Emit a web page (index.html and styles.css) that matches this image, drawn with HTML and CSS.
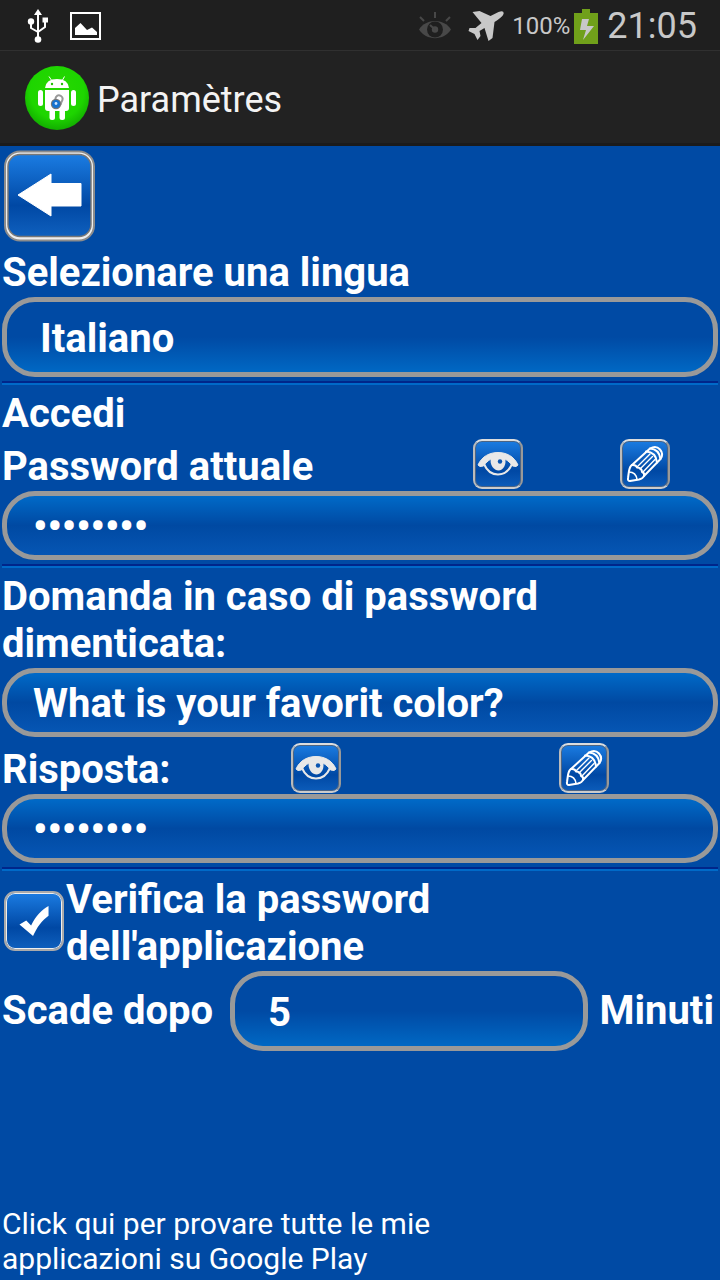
FILE: index.html
```html
<!DOCTYPE html>
<html lang="it">
<head>
<meta charset="utf-8">
<meta name="viewport" content="width=device-width, initial-scale=1">
<title>Paramètres</title>
<link rel="stylesheet" href="styles.css">
</head>
<body>
<svg class="defs" aria-hidden="true">
  <defs>
    <linearGradient id="face" x1="0" y1="0" x2="0" y2="1">
      <stop offset="0" stop-color="#1b7ce2"/>
      <stop offset="0.62" stop-color="#0048a4"/>
      <stop offset="1" stop-color="#0f60be"/>
    </linearGradient>
    <radialGradient id="green" cx="0.5" cy="0.4" r="0.6">
      <stop offset="0" stop-color="#27d800"/>
      <stop offset="0.7" stop-color="#1ed500"/>
      <stop offset="1" stop-color="#12ad00"/>
    </radialGradient>
    <symbol id="eye" viewBox="0 0 50 50">
      <path d="M11 25C14 32 19 35.500 25 35.500S36 32 39 25" fill="none" stroke="#e8e8e8" stroke-width="2"/>
      <path d="M5 26C9 17 17 13.500 25 13.500S41 17 45 26L43 27.500L39.500 27C35 20.500 30 18.500 25 18.500S15 20.500 10.500 27L7 27.500Z" fill="#e8e8e8" stroke="#e8e8e8" stroke-linejoin="round"/>
      <path d="M18 18H32C34 26 30 31.500 25.500 31.500S16 26 18 18Z" fill="#e8e8e8"/>
      <circle cx="27" cy="22.500" r="2.200" fill="#0a55b0"/>
    </symbol>
    <symbol id="pencil" viewBox="0 0 50 50">
      <g fill="none" stroke="#fff" stroke-width="2" stroke-linejoin="round" stroke-linecap="round">
        <path d="M12 26L30 9.500Q36 6 40 10.500T40.500 20L24 37Q23 39.500 19 40.500L10 42Q7.500 42 8 39L9 32Q10 27 12 26Z"/>
        <path d="M12 26Q16 25.500 17 28.500Q22 29 22 33Q25 34 24 37"/>
        <path d="M9 33Q16 33 17 40.500" stroke-width="1.600"/>
        <path d="M26 12.500Q36 13 37 23.500M30 9.500Q39 10 40.500 20"/>
        <path d="M17 28L30 15M20 30L32.500 17.500M23 33L35 20.500" stroke-width="1.400"/>
      </g>
    </symbol>
  </defs>
</svg>

<header class="status">
  <svg class="usb" viewBox="0 0 22 34" aria-label="USB"><g fill="none" stroke="#fff" stroke-width="2"><path d="M11 4V31M4 13V19L11 23M18 11V18L11 23"/></g><g fill="#fff"><path d="M11 0L15 6H7Z"/><circle cx="4" cy="12.500" r="3.200"/><path d="M15.500 8.500H21V13.500H15.500Z"/><circle cx="11" cy="30.500" r="3.300"/></g></svg>
  <svg class="photo" viewBox="0 0 32 28" aria-label="Immagine"><path d="M1 1H30V27H1Z" fill="none" stroke="#fff" stroke-width="2"/><path d="M5 23V16L10.500 11L17 18L22 15.500L27 20V23Z" fill="#fff"/></svg>
  <span class="spacer"></span>
  <svg class="look" viewBox="0 0 34 28" aria-label="Smart stay"><path d="M1 17.500C8 6 26 6 33 17.500C26 29 8 29 1 17.500Z" fill="#484848"/><circle cx="17" cy="17.500" r="8" fill="#1f1f1f"/><circle cx="17" cy="17.500" r="3.200" fill="#484848"/><path d="M12 13L17 17.500M17 0V6M2 5L6 9M32 5L28 9" stroke="#484848" stroke-width="2"/></svg>
  <svg class="plane" viewBox="0 0 36 30" aria-label="Modalità aereo"><path d="M4 1L11 0L22 5L30 1Q36 -1 35 3Q34 6 26 11L24 27L20 30L16 17L11 20L12 25L9 29L6 23L0 20L1 17L7 17L13 12Z" fill="#c8c8c8"/></svg>
  <span class="percent">100%</span>
  <svg class="battery" viewBox="0 0 24 35" aria-label="In carica"><path d="M8 0H16V4H24V35H0V4H8Z" fill="#70a01a"/><path d="M8 10H15L13 17H20L9 31L12 21H6Z" fill="#c8c8c8"/></svg>
  <time class="clock">21:05</time>
</header>

<div class="appbar">
  <svg class="logo" viewBox="0 0 64 64" aria-hidden="true">
    <circle cx="32" cy="32" r="32" fill="url(#green)"/>
    <g fill="#fff">
      <path d="M20 22Q21 13 32 13T44 22Z"/>
      <path d="M24 10.500L27 15M39.500 10.500L37 15" stroke="#fff"/>
      <path d="M20 24H44V42Q44 45 41 45H23Q20 45 20 42Z"/>
      <rect x="13" y="24" width="5" height="16" rx="2.500"/><rect x="46" y="24" width="5" height="16" rx="2.500"/>
      <rect x="24.500" y="42" width="5.500" height="12" rx="2.500"/><rect x="34.500" y="42" width="5.500" height="12" rx="2.500"/>
    </g>
    <circle cx="27" cy="18" r="1.200" fill="#20c000"/><circle cx="37" cy="18" r="1.200" fill="#20c000"/>
    <path d="M30 34L31 31Q33 28 36 30T36.500 36L35.500 39" fill="none" stroke="#999" stroke-width="2"/>
    <circle cx="31" cy="38" r="5.200" fill="#777"/><circle cx="31" cy="38" r="4" fill="#1672d0"/><circle cx="31" cy="37.500" r="1.400" fill="#cfe6ff"/>
  </svg>
  <h1 class="title">Paramètres</h1>
</div>

<main class="page">
  <button class="back" type="button" aria-label="Indietro">
    <svg class="back-art" viewBox="0 0 92 92"><rect x="1" y="1.500" width="89" height="89" rx="15" fill="#eee" stroke="#8c8c8c" stroke-width="2"/><rect x="4" y="4.500" width="83" height="82" rx="12" fill="url(#face)" stroke="#777" stroke-width="1.500"/><path d="M14 45L47 24V33.500H77V56H47V66Z" fill="#fff" stroke="#fff" stroke-linejoin="round" stroke-width="1"/></svg>
  </button>

  <section class="group">
    <label class="label" for="language">Selezionare una lingua</label>
    <select class="field choice" id="language"><option>Italiano</option></select>
  </section>

  <section class="group">
    <h2 class="label">Accedi</h2>
    <div class="row row-password">
      <label class="label" for="password">Password attuale</label>
      <button class="tool" type="button" aria-label="Mostra password"><svg class="tool-art"><use href="#eye"/></svg></button>
      <button class="tool" type="button" aria-label="Modifica password"><svg class="tool-art"><use href="#pencil"/></svg></button>
    </div>
    <input class="field entry" id="password" type="password" value="password">
  </section>

  <section class="group">
    <label class="label" for="question">Domanda in caso di password dimenticata:</label>
    <input class="field entry question" id="question" type="text" value="What is your favorit color?">
    <div class="row row-answer">
      <label class="label" for="answer">Risposta:</label>
      <button class="tool" type="button" aria-label="Mostra risposta"><svg class="tool-art"><use href="#eye"/></svg></button>
      <button class="tool" type="button" aria-label="Modifica risposta"><svg class="tool-art"><use href="#pencil"/></svg></button>
    </div>
    <input class="field entry" id="answer" type="password" value="response">
  </section>

  <section class="group last">
    <div class="verify">
      <span class="check">
        <input class="check-input" id="verify" type="checkbox" checked>
        <svg class="check-art" viewBox="0 0 30 32" aria-hidden="true"><path d="M0 19L7 15L12 20C17 10 23 4 30 0V10C23 15 18 22 14 31Z" fill="#fff"/></svg>
      </span>
      <label class="label" for="verify">Verifica la password dell'applicazione</label>
    </div>
    <div class="expiry">
      <label class="label" for="minutes">Scade dopo</label>
      <select class="field choice" id="minutes"><option>5</option></select>
      <span class="label">Minuti</span>
    </div>
  </section>

  <a class="promo" href="#">Click qui per provare tutte le mie applicazioni su Google Play</a>
</main>
</body>
</html>
```
FILE: styles.css
```css
* { box-sizing: border-box; }

body {
  margin: 0;
  min-height: 100vh;
  display: flex;
  flex-direction: column;
  background: #004aa4;
  color: #fff;
  font-family: Roboto, "Noto Sans", sans-serif;
}

.defs { position: absolute; width: 0; height: 0; }
svg { display: block; flex: none; }

.status {
  display: flex;
  align-items: center;
  height: 51px;
  padding: 2px 23px 0 27px;
  background: #1f1f1f;
  border-bottom: 1px solid #303030;
  color: #c8c8c8;
}
.usb { width: 22px; height: 34px; margin-right: 21px; }
.photo { width: 32px; height: 28px; }
.spacer { flex: 1; }
.look { width: 34px; height: 28px; margin-right: 16px; }
.plane { width: 37px; height: 30px; margin-right: 7px; }
.percent { font-size: 24px; margin-right: 4px; }
.battery { width: 24px; height: 35px; margin-right: 9px; }
.clock { font-size: 36px; line-height: 48px; }

.appbar {
  display: flex;
  align-items: center;
  gap: 8px;
  height: 95px;
  padding: 2px 25px 0;
  background: #222;
  border-bottom: 3px solid #1b1b1b;
}
.logo { width: 64px; height: 64px; }
.title { margin: 0; padding-top: 4px; font-size: 36px; font-weight: 400; line-height: 48px; color: #f3f3f3; }

.page {
  flex: 1;
  display: flex;
  flex-direction: column;
  padding: 4px 2px;
}

.label {
  display: block;
  margin: 0;
  font-size: 40px;
  font-weight: 700;
  line-height: 47px;
}

.back {
  width: 92px;
  height: 92px;
  margin: 0 0 7px 2px;
  padding: 0;
  border: 0;
  background: none;
}
.back-art { width: 92px; height: 92px; }

.group {
  position: relative;
  margin-bottom: 5px;
  padding-bottom: 8px;
}
.group:not(.last)::after {
  content: "";
  position: absolute;
  left: 0;
  right: 0;
  bottom: 0;
  height: 4px;
  background: linear-gradient(#00268a 50%, #006ac8 50%);
}

.field {
  display: block;
  width: 100%;
  margin: 0;
  border: 5px solid #999;
  border-radius: 33px;
  outline: 0;
  color: #fff;
  font: 700 40px/47px Roboto, "Noto Sans", sans-serif;
}
.choice {
  appearance: none;
  height: 80px;
  margin-top: 1px;
  padding: 2px 33px 0;
  background: linear-gradient(#004aa4 50%, #0068c4);
}
.entry {
  height: 69px;
  padding: 2px 26px 0;
  background: linear-gradient(#006ac8, #0049a2 50%, #0656b4);
}
.question { margin-top: 1px; }

.row {
  display: grid;
  align-items: center;
  justify-items: center;
  height: 54px;
}
.row .label { justify-self: start; padding-top: 4px; }
.row-password { grid-template-columns: 423px 1fr 1fr; }
.row-answer { grid-template-columns: 180px 1fr 1fr; height: 57px; }
.row-answer .label { padding-top: 7px; }
.row-answer .tool { margin-top: 5px; }

.tool {
  width: 50px;
  height: 50px;
  padding: 0;
  border: 2px solid #ccc;
  border-color: #ddd #999 #ccc #bbb;
  border-radius: 9px;
  background: linear-gradient(#1b7ce2, #0048a4 65%, #0c5cba);
  box-shadow: inset 0 0 0 1px #4b6484;
}
.tool-art { width: 50px; height: 50px; margin: -2px; }

.verify { display: flex; align-items: center; }
.verify .label { max-width: 420px; }
.check {
  display: grid;
  flex: none;
  margin: 0 2px 4px;
}
.check-input, .check-art { grid-area: 1 / 1; place-self: center; }
.check-input {
  appearance: none;
  width: 60px;
  height: 60px;
  margin: 0;
  border: 2px solid #aaa;
  border-radius: 11px;
  background: linear-gradient(#1b7ce2, #0048a4 62%, #0f60be);
  box-shadow: inset 0 0 0 1px #eee;
}
.check-art { width: 32px; height: 31px; z-index: 1; pointer-events: none; }

.expiry { display: flex; align-items: center; gap: 11px; padding-right: 4px; }
.expiry .label:first-child { width: 217px; }
.expiry .label { flex: none; }
.expiry .choice { flex: 1; min-width: 0; }

.promo {
  max-width: 450px;
  margin-top: auto;
  color: #fff;
  font-size: 30px;
  line-height: 35px;
  text-decoration: none;
}
```
